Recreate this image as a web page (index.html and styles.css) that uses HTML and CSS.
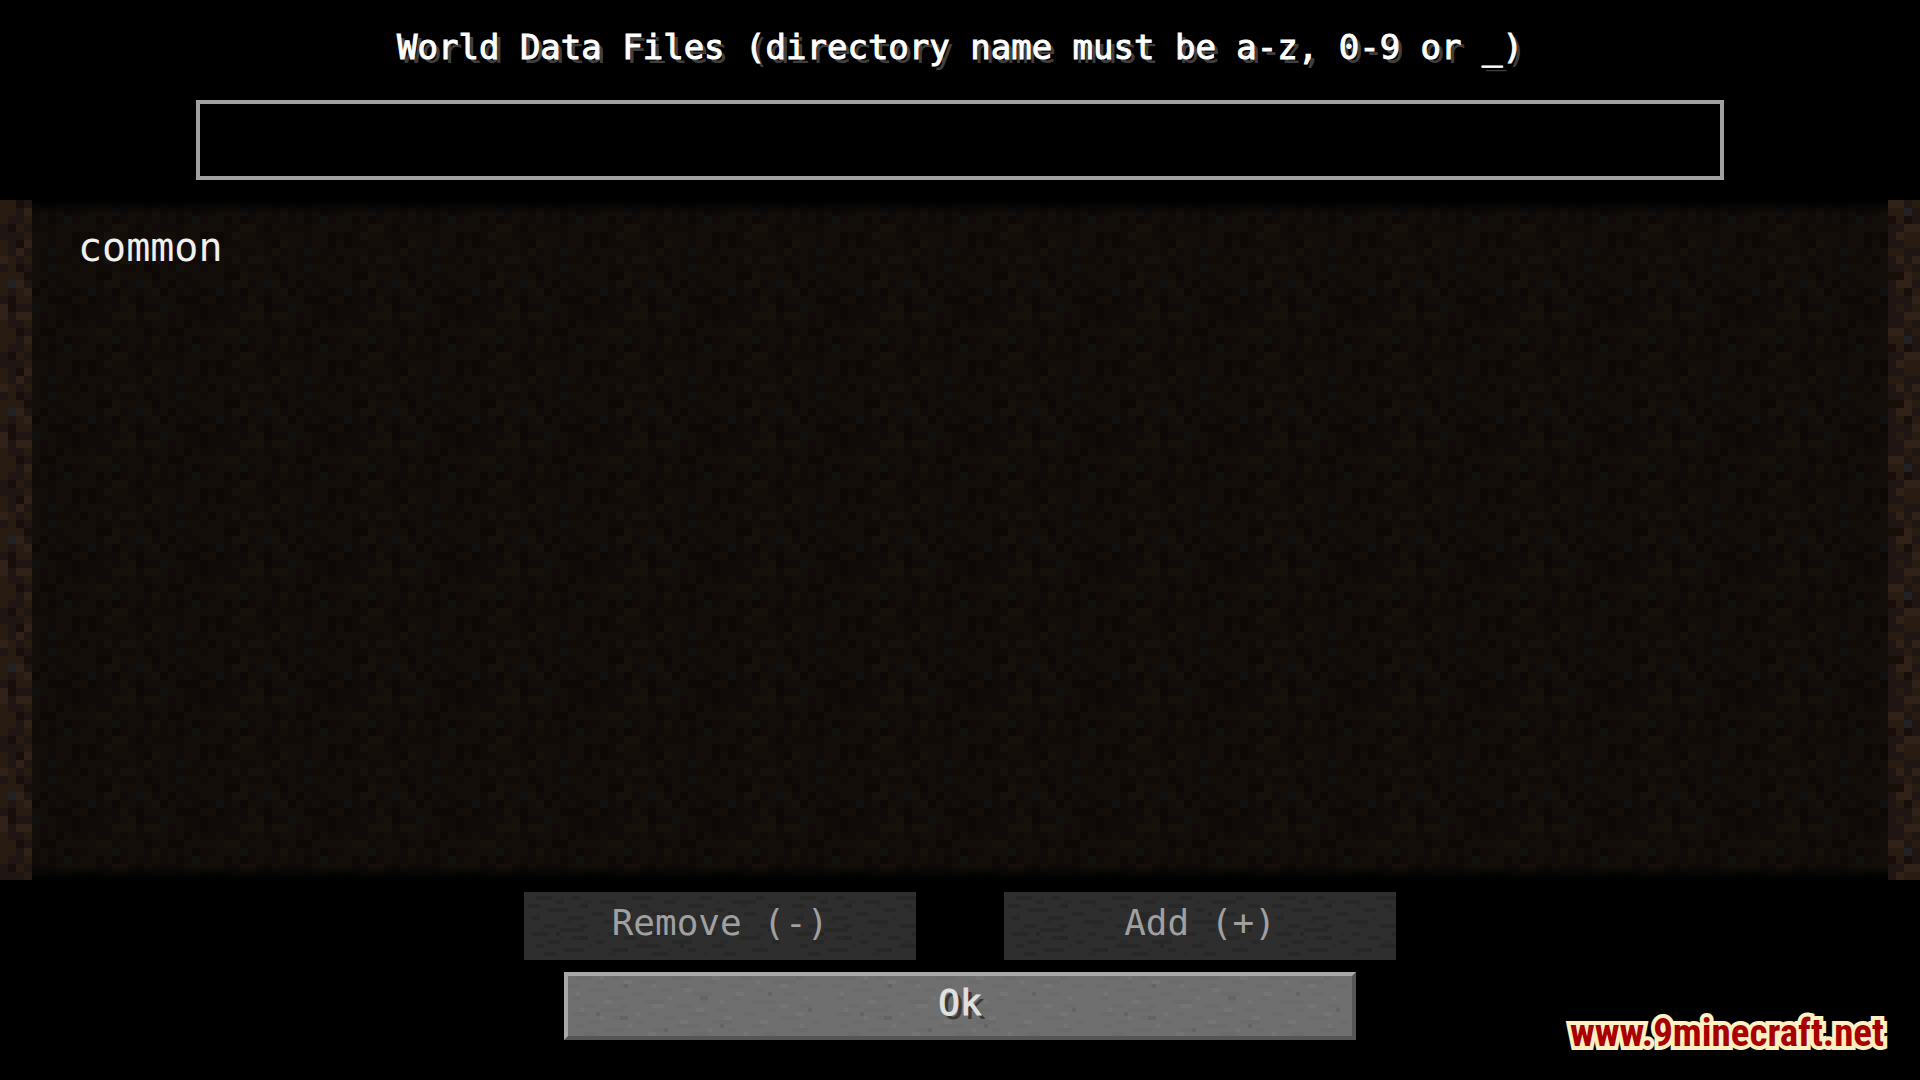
FILE: index.html
```
<!DOCTYPE html>
<html lang="en">
<head>
    <meta charset="UTF-8">
    <meta name="viewport" content="width=device-width, initial-scale=1.0">
    <title>World Data Files</title>
    <link rel="stylesheet" href="styles.css">
</head>
<body>

<form class="screen">
    <header class="header">
        <label class="title" for="directory">World Data Files (directory name must be a-z, 0-9 or _)</label>
        <input class="directory-input" type="text" id="directory" name="directory" pattern="[a-z0-9_]+" autocomplete="off">
    </header>

    <main class="list-area">
        <ul class="list">
            <li class="list-item">common</li>
        </ul>
    </main>

    <footer class="footer">
        <div class="button-row">
            <button class="button" type="button" disabled>Remove (-)</button>
            <button class="button" type="button" disabled>Add (+)</button>
        </div>
        <button class="button button-ok" type="submit">Ok</button>
        <a class="site-link" href="#">www.9minecraft.net</a>
    </footer>
</form>

</body>
</html>
```
FILE: styles.css
```
* {
    box-sizing: border-box;
}
body {
    margin: 0;
    background-color: #000;
    color: #fff;
    font-family: "DejaVu Sans Mono", monospace;
}
.screen {
    display: flex;
    flex-direction: column;
    min-height: 100vh;
}
.header {
    display: flex;
    flex-direction: column;
    align-items: center;
    gap: 12px;
    padding: 24px 20px 20px;
}
.title {
    font-size: 34px;
    line-height: 46px;
    min-height: 64px;
    text-shadow: 4px 4px 0 #3f3f3f;
    -webkit-text-stroke: 1px #fff;
}
.directory-input {
    width: 100%;
    max-width: 1528px;
    height: 80px;
    padding: 0 16px;
    border: 4px solid #a0a0a0;
    background-color: #000;
    color: #e0e0e0;
    font-family: inherit;
    font-size: 36px;
    outline: none;
}

/* 16x16 dirt tile, 8px per texel */
.list-area {
    display: flex;
    flex: 1;
    padding: 0 32px;
    background-color: #281c12;
    background-image: url("data:image/svg+xml,%3Csvg xmlns='http://www.w3.org/2000/svg' viewBox='0 -.5 16 16' width='128' height='128' shape-rendering='crispEdges'%3E%3Cpath stroke='%231f1512' d='M2 0h1M5 0h4M12 0h1M14 0h1M0 1h1M3 1h1M5 1h1M9 1h1M12 1h2M15 1h1M6 2h2M3 3h1M7 3h2M12 3h1M15 3h1M1 4h1M6 4h1M8 4h1M10 4h1M12 4h1M0 5h1M12 5h3M2 6h2M7 6h2M10 6h3M14 6h1M1 7h1M5 7h1M7 7h2M10 7h4M1 8h2M5 8h1M9 8h2M12 8h2M15 8h1M3 9h1M14 9h1M2 10h1M4 10h1M6 10h1M9 10h2M15 10h1M1 11h2M4 11h1M7 11h1M9 11h1M15 11h1M0 12h1M3 12h4M12 12h2M0 13h3M6 13h1M10 13h1M12 13h1M1 14h1M6 14h1M12 14h2M1 15h1M3 15h1M5 15h1M8 15h2M14 15h2'/%3E%3Cpath stroke='%23180e09' d='M10 0h1M2 1h1M3 2h1M12 2h2M5 3h1M4 4h1M9 4h1M14 4h1M1 5h1M6 5h3M11 5h1M1 6h1M9 6h1M9 7h1M7 8h1M2 9h1M5 9h2M8 10h1M6 11h1M12 11h1M14 11h1M1 12h1M9 13h1M11 13h1M2 14h1M9 14h1M11 14h1'/%3E%3Cpath stroke='%23302218' d='M0 0h1M13 0h1M15 0h1M14 2h1M2 3h1M13 3h2M3 4h1M15 5h1M0 6h1M0 7h1M2 7h2M14 7h2M12 9h2M3 10h1M14 12h2M13 13h1M3 14h1M2 15h1'/%3E%3Cpath stroke='%23202223' d='M6 1h1M1 3h1M11 4h1M4 6h1M14 10h1M8 11h1M6 15h1'/%3E%3C/svg%3E");
    background-attachment: fixed;
}
.list {
    flex: 1;
    margin: 0;
    padding: 24px 46px;
    list-style: none;
    background-color: rgba(6, 6, 4, 0.58);
    background-image: linear-gradient(#000, transparent 16px, transparent calc(100% - 16px), #000);
}
.list-item {
    color: #f0f0f0;
    font-size: 40px;
    line-height: 46px;
}

.footer {
    position: relative;
    display: flex;
    flex-direction: column;
    align-items: center;
    gap: 12px;
    padding: 12px 20px 40px;
}
.button-row {
    display: flex;
    justify-content: center;
    gap: 88px;
    width: 100%;
}

/* stone specks, 4px per texel */
.button {
    width: 392px;
    height: 68px;
    padding: 0 0 6px;
    border: none;
    background-color: #6f6f6f;
    background-image: url("data:image/svg+xml,%3Csvg xmlns='http://www.w3.org/2000/svg' viewBox='0 -.5 66 17' width='264' height='68' shape-rendering='crispEdges'%3E%3Cpath stroke='%236b6b6b' d='M3 1h4M12 1h2M27 1h5M44 1h3M58 1h2M8 2h2M19 2h4M35 2h3M52 2h6M1 3h3M14 3h2M29 3h2M41 3h4M61 3h3M6 4h5M24 4h3M48 4h2M17 5h3M32 5h5M55 5h3M2 6h2M11 6h4M42 6h2M20 7h5M34 7h2M47 7h6M5 8h3M14 8h2M28 8h4M59 8h3M9 9h6M38 9h3M51 9h2M2 10h4M21 10h2M31 10h5M45 10h3M12 11h3M25 11h3M54 11h5M6 12h3M18 12h2M37 12h5M62 12h2M3 13h2M28 13h6M47 13h3M10 14h5M22 14h3M41 14h2M57 14h4M5 15h3M32 15h4M50 15h3'/%3E%3Cpath stroke='%23757575' d='M9 1h1M37 1h2M15 2h2M48 2h1M22 3h1M54 3h2M30 4h2M3 5h1M43 5h2M26 6h1M60 6h1M10 7h2M39 7h1M22 8h3M54 8h2M4 9h1M33 9h2M18 10h1M58 10h2M9 11h1M40 11h2M29 12h2M49 12h2M16 13h1M59 13h1M36 14h1M21 15h2M45 15h1'/%3E%3Cpath stroke='%23636363' d='M15 3h1M34 6h2M8 10h1M51 5h1M14 11h2M39 13h1M61 9h1M25 14h1'/%3E%3C/svg%3E");
    color: #e0e0e0;
    font-family: inherit;
    font-size: 36px;
    line-height: 44px;
    cursor: pointer;
}
.button:disabled {
    background-color: #2e2e2e;
    background-blend-mode: soft-light;
    color: #a0a0a0;
    cursor: default;
}
.button-ok {
    width: 792px;
    border: 4px solid;
    border-color: #a9a9a9 #565656 #565656 #a9a9a9;
    background-origin: border-box;
    text-shadow: 4px 4px 0 #383838;
    -webkit-text-stroke: 1px #e0e0e0;
}
.site-link {
    position: absolute;
    right: 36px;
    bottom: 24px;
    color: #a80000;
    font-family: "Roboto Condensed", "Liberation Sans Narrow", sans-serif;
    font-size: 39px;
    font-weight: bold;
    line-height: 46px;
    text-decoration: none;
    text-shadow: 0 0 4px #fff0c4;
    -webkit-text-stroke: 8px #fff0c4;
    paint-order: stroke fill;
}
```
